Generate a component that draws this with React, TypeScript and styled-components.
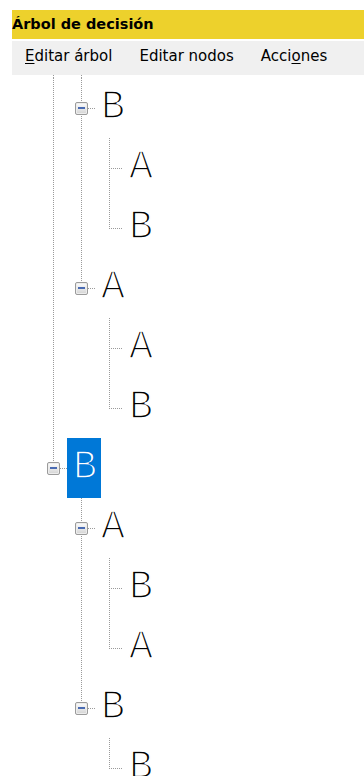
import styled, { createGlobalStyle } from "styled-components";

type Node = {
  label: string;
  anc: boolean[];
  handle: boolean;
  last: boolean;
  selected?: boolean;
};

const rows: Node[] = [
  { label: "B", anc: [true], handle: true, last: false },
  { label: "A", anc: [true, true], handle: false, last: false },
  { label: "B", anc: [true, true], handle: false, last: true },
  { label: "A", anc: [true], handle: true, last: true },
  { label: "A", anc: [true, false], handle: false, last: false },
  { label: "B", anc: [true, false], handle: false, last: true },
  { label: "B", anc: [], handle: true, last: true, selected: true },
  { label: "A", anc: [false], handle: true, last: false },
  { label: "B", anc: [false, true], handle: false, last: false },
  { label: "A", anc: [false, true], handle: false, last: true },
  { label: "B", anc: [false], handle: true, last: true },
  { label: "B", anc: [false, false], handle: false, last: true },
];

const dotV =
  "repeating-linear-gradient(to bottom, #9a9a9a 0 1px, transparent 1px 2px)";
const dotH =
  "repeating-linear-gradient(to right, #9a9a9a 0 1px, transparent 1px 2px)";

const GlobalStyle = createGlobalStyle`
  html, body {
    margin: 0;
    padding: 0;
    height: 100%;
    overflow: hidden;
    background: #fff;
  }
`;

const Window = styled.div`
  margin: 10px 0 0 12px;
  height: 766px;
  display: flex;
  flex-direction: column;
  overflow: hidden;
`;

const TitleBar = styled.div`
  height: 29px;
  line-height: 29px;
  margin-bottom: 2px;
  background: #edd12c;
  color: #000;
  font-family: "DejaVu Sans", Verdana, sans-serif;
  font-weight: bold;
  font-size: 14.5px;
  white-space: nowrap;
`;

const MenuBar = styled.div`
  display: flex;
  height: 34px;
  background: #f0f0f0;
  font-family: "DejaVu Sans", Verdana, sans-serif;
  font-size: 15px;
  color: #000;
`;

const MenuItem = styled.div`
  padding: 0 13px;
  margin-right: 1px;
  line-height: 30px;
  white-space: nowrap;
`;

const Mnemonic = styled.span`
  text-decoration: underline;
  text-underline-offset: 2px;
`;

const Tree = styled.div`
  flex: 1;
  overflow: hidden;
  padding-left: 27px;
  background: #fff;
`;

const Row = styled.div<{ $h: number }>`
  display: flex;
  height: ${({ $h }) => $h}px;
`;

const Guide = styled.div<{
  $full?: boolean;
  $up?: boolean;
  $down?: boolean;
  $stub?: number;
}>`
  width: 28px;
  height: 100%;
  flex-shrink: 0;
  box-sizing: border-box;
  padding-left: 8px;
  display: flex;
  align-items: center;
  background-repeat: no-repeat;
  ${({ $full, $up, $down, $stub }) => {
    const imgs: string[] = [];
    const pos: string[] = [];
    const size: string[] = [];
    if ($full) {
      imgs.push(dotV);
      pos.push("14px 0");
      size.push("1px 100%");
    }
    if ($up) {
      imgs.push(dotV);
      pos.push("14px 0");
      size.push("1px 50%");
    }
    if ($down) {
      imgs.push(dotV);
      pos.push("14px 100%");
      size.push("1px 50%");
    }
    if ($stub !== undefined) {
      imgs.push(dotH);
      pos.push(`${$stub}px 30px`);
      size.push(`${28 - $stub}px 1px`);
    }
    if (!imgs.length) return "";
    return `
      background-image: ${imgs.join(", ")};
      background-position: ${pos.join(", ")};
      background-size: ${size.join(", ")};
    `;
  }}
`;

const Handle = styled.div`
  width: 13px;
  height: 13px;
  box-sizing: border-box;
  border: 1px solid #9b9b9b;
  border-radius: 2px;
  background: linear-gradient(#fdfdfd, #d4d4d4);
  box-shadow: inset 0 0 0 1px #ededed;
  display: flex;
  align-items: center;
  justify-content: center;

  &::after {
    content: "";
    width: 7px;
    height: 2px;
    background: #4a6bb3;
  }
`;

const Label = styled.div<{ $selected?: boolean }>`
  height: 60px;
  line-height: 60px;
  padding: 0 4px 0 6px;
  font-family: "Liberation Mono", "Courier New", monospace;
  font-size: 40px;
  color: ${({ $selected }) => ($selected ? "#fff" : "#000")};
  background: ${({ $selected }) => ($selected ? "#0078d7" : "transparent")};
  -webkit-text-stroke: 1.7px
    ${({ $selected }) => ($selected ? "#0078d7" : "#fff")};
`;

export default function App() {
  return (
    <>
      <GlobalStyle />
      <Window>
        <TitleBar>Árbol de decisión</TitleBar>
        <MenuBar>
          <MenuItem>
            <Mnemonic>E</Mnemonic>ditar árbol
          </MenuItem>
          <MenuItem>Editar nodos</MenuItem>
          <MenuItem>
            Acci<Mnemonic>o</Mnemonic>nes
          </MenuItem>
        </MenuBar>
        <Tree>
          <Row $h={3}>
            <Guide $full />
            <Guide $full />
          </Row>
          {rows.map((r, i) => (
            <Row key={i} $h={60}>
              {r.anc.map((c, j) => (
                <Guide key={j} $full={c} />
              ))}
              {r.handle ? (
                <Guide $up $down={!r.last} $stub={21}>
                  <Handle />
                </Guide>
              ) : (
                <Guide $up $down={!r.last} $stub={14} />
              )}
              <Label $selected={r.selected}>{r.label}</Label>
            </Row>
          ))}
        </Tree>
      </Window>
    </>
  );
}
